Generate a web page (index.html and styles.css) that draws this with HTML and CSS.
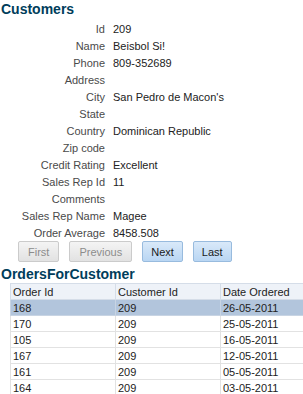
FILE: index.html
```html
<!DOCTYPE html>
<html lang="en">
<head>
    <meta charset="UTF-8">
    <title>Customers</title>
    <link rel="stylesheet" href="styles.css">
</head>
<body>
    <h1 class="title">Customers</h1>

    <!-- Customer form -->
    <div class="form">
        <span class="label">Id</span><span class="value">209</span>
        <span class="label">Name</span><span class="value">Beisbol Si!</span>
        <span class="label">Phone</span><span class="value">809-352689</span>
        <span class="label">Address</span><span class="value"></span>
        <span class="label">City</span><span class="value">San Pedro de Macon's</span>
        <span class="label">State</span><span class="value"></span>
        <span class="label">Country</span><span class="value">Dominican Republic</span>
        <span class="label">Zip code</span><span class="value"></span>
        <span class="label">Credit Rating</span><span class="value">Excellent</span>
        <span class="label">Sales Rep Id</span><span class="value">11</span>
        <span class="label">Comments</span><span class="value"></span>
        <span class="label">Sales Rep Name</span><span class="value">Magee</span>
        <span class="label">Order Average</span><span class="value">8458.508</span>
    </div>

    <!-- Navigation buttons -->
    <div class="nav">
        <button class="btn" disabled>First</button>
        <button class="btn" disabled>Previous</button>
        <button class="btn">Next</button>
        <button class="btn">Last</button>
    </div>

    <h1 class="title">OrdersForCustomer</h1>

    <!-- Orders table -->
    <div class="table-wrap">
        <table class="orders">
            <thead>
                <tr><th>Order Id</th><th>Customer Id</th><th>Date Ordered</th></tr>
            </thead>
            <tbody>
                <tr class="selected"><td>168</td><td>209</td><td>26-05-2011</td></tr>
                <tr><td>170</td><td>209</td><td>25-05-2011</td></tr>
                <tr><td>105</td><td>209</td><td>16-05-2011</td></tr>
                <tr><td>167</td><td>209</td><td>12-05-2011</td></tr>
                <tr><td>161</td><td>209</td><td>05-05-2011</td></tr>
                <tr><td>164</td><td>209</td><td>03-05-2011</td></tr>
            </tbody>
        </table>
    </div>
</body>
</html>
```

FILE: styles.css
```css
/* Base */
* {
    margin: 0;
    padding: 0;
    box-sizing: border-box;
}

body {
    font-family: "Liberation Sans", Arial, sans-serif;
    font-size: 11px;
    color: #333;
    background: #fff;
    overflow: hidden;
}

/* Section titles */
.title {
    font-size: 14px;
    font-weight: bold;
    color: #003d5b;
    line-height: 18px;
    padding-left: 1px;
}

/* Form */
.form {
    display: grid;
    grid-template-columns: 105px 1fr;
    column-gap: 8px;
    grid-auto-rows: 17px;
    align-items: center;
    margin-top: 2px;
}

.label {
    text-align: right;
    color: #4a4a4a;
}

.value {
    color: #222;
}

/* Buttons */
.nav {
    display: flex;
    gap: 10px;
    padding-left: 18px;
    margin-bottom: 3px;
}

.btn {
    font-family: inherit;
    font-size: 11px;
    height: 21px;
    padding: 0 8px;
    border: 1px solid #98bbde;
    border-radius: 2px;
    background: linear-gradient(#d9e9f9, #b9d6f3);
    color: #1a1a1a;
    cursor: pointer;
}

.btn:disabled {
    padding: 0 9px;
    border-color: #cbcbcb;
    background: linear-gradient(#f4f4f4, #e2e2e2);
    color: #8c8c8c;
    cursor: default;
}

/* Orders table */
.table-wrap {
    padding-left: 10px;
    overflow: hidden;
}

.orders {
    border-collapse: collapse;
    table-layout: fixed;
    width: 315px;
}

.orders th,
.orders td {
    width: 105px;
    height: 16px;
    padding: 0 2px;
    text-align: left;
    font-weight: normal;
    white-space: nowrap;
    border: 1px solid #e2e2e2;
    color: #222;
}

.orders th {
    background: #eef2f8;
    border-color: #d5dde8;
}

.orders .selected td {
    background: #b2c5dc;
    border-color: #c8d4e3;
}
```
